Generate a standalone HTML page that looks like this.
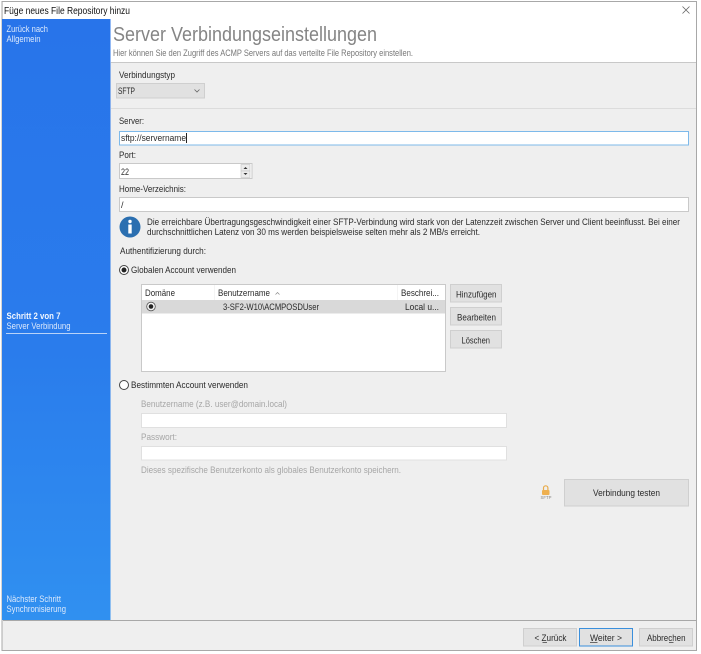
<!DOCTYPE html>
<html lang="de"><head><meta charset="utf-8"><title>Füge neues File Repository hinzu</title>
<style>
html,body{margin:0;padding:0;background:#fff;width:701px;height:654px;overflow:hidden}
svg{display:block;filter:blur(.35px)}
text{font-family:"Liberation Sans",sans-serif;font-size:9.5px;fill:#2a2a2a;white-space:pre}
.s{fill:#dce9fc}
.d{fill:#a6a6a6}
.b{fill:#e1e1e1;stroke:#cfcfcf;stroke-width:1}
.i{fill:#fff;stroke:#c9c9c9;stroke-width:1}
</style></head><body>
<svg width="701" height="654" viewBox="0 0 701 654" xmlns="http://www.w3.org/2000/svg">
<defs><linearGradient id="g" x1="0" y1="0" x2="0" y2="1"><stop offset="0" stop-color="#2874ea"/><stop offset=".55" stop-color="#2a7cec"/><stop offset="1" stop-color="#3090f0"/></linearGradient></defs>
<rect width="701" height="654" fill="#fff"/>
<rect x="2" y="1.500" width="694.500" height="649" fill="#efefef" stroke="#a8a8a8"/>
<rect x="3" y="2" width="693" height="60" fill="#fff"/>
<rect x="111" y="62" width="585" height="1" fill="#c8c8c8"/>
<rect x="111" y="108" width="585" height="1" fill="#dcdcdc"/>
<rect x="2" y="19" width="108.500" height="601" fill="url(#g)"/>
<rect x="3" y="620" width="693" height="1" fill="#a8a8a8"/>

<text x="4" y="14" textLength="126" lengthAdjust="spacingAndGlyphs" style="font-size:10px;fill:#111">Füge neues File Repository hinzu</text>
<path d="M682.500 6.500l7 7M689.500 6.500l-7 7" stroke="#666" stroke-width=".8" fill="none"/>

<text class="s" x="6.500" y="32" textLength="41.500" lengthAdjust="spacingAndGlyphs">Zurück nach</text>
<text class="s" x="6.500" y="42" textLength="34" lengthAdjust="spacingAndGlyphs">Allgemein</text>
<text x="6.500" y="319" textLength="54" lengthAdjust="spacingAndGlyphs" style="fill:#f2f7ff;font-weight:bold">Schritt 2 von 7</text>
<text class="s" x="6.500" y="329" textLength="64" lengthAdjust="spacingAndGlyphs">Server Verbindung</text>
<rect x="6" y="333" width="101" height="1" fill="#b9d3f8"/>
<text class="s" x="6.500" y="602" textLength="54.500" lengthAdjust="spacingAndGlyphs">Nächster Schritt</text>
<text class="s" x="6.500" y="612" textLength="59.500" lengthAdjust="spacingAndGlyphs">Synchronisierung</text>

<text x="113" y="41" textLength="264" lengthAdjust="spacingAndGlyphs" style="font-size:20.500px;fill:#858585">Server Verbindungseinstellungen</text>
<text x="113" y="56" textLength="300" lengthAdjust="spacingAndGlyphs" style="font-size:9px;fill:#777">Hier können Sie den Zugriff des ACMP Servers auf das verteilte File Repository einstellen.</text>

<text x="119" y="78" textLength="56" lengthAdjust="spacingAndGlyphs">Verbindungstyp</text>
<rect class="b" x="116.500" y="83.500" width="88" height="14.500"/>
<text x="118" y="94" textLength="17" lengthAdjust="spacingAndGlyphs">SFTP</text>
<path d="M194.500 89.500l2.500 2.500 2.500-2.500" stroke="#666" stroke-width=".8" fill="none"/>

<text x="119" y="124" textLength="25" lengthAdjust="spacingAndGlyphs">Server:</text>
<rect x="119.500" y="131.500" width="569" height="13.500" fill="#fff" stroke="#7db9ea"/>
<text x="121" y="141" textLength="65" lengthAdjust="spacingAndGlyphs">sftp://servername</text>
<rect x="186" y="133" width="1" height="10" fill="#222"/>

<text x="119" y="158" textLength="17" lengthAdjust="spacingAndGlyphs">Port:</text>
<rect class="i" x="119.500" y="163.500" width="132.500" height="15" stroke="#b5b5b5"/>
<text x="121" y="175" textLength="8" lengthAdjust="spacingAndGlyphs">22</text>
<rect x="241" y="164.500" width="9" height="6.500" fill="#ececec" stroke="#c4c4c4" stroke-width=".6"/>
<rect x="241" y="171" width="9" height="6.500" fill="#ececec" stroke="#c4c4c4" stroke-width=".6"/>
<path d="M243.500 169l2-2 2 2zM243.500 173l2 2 2-2z" fill="#333"/>

<text x="119" y="192" textLength="67" lengthAdjust="spacingAndGlyphs">Home-Verzeichnis:</text>
<rect class="i" x="119.500" y="197.500" width="569" height="14"/>
<text x="121" y="208" textLength="2.500" lengthAdjust="spacingAndGlyphs">/</text>

<circle cx="130" cy="227" r="10.500" fill="#2b6fb0"/>
<circle cx="130" cy="221.500" r="1.700" fill="#fff"/>
<rect x="128.300" y="224.500" width="3.400" height="9" fill="#fff"/>
<text x="147" y="225" textLength="533" lengthAdjust="spacingAndGlyphs">Die erreichbare Übertragungsgeschwindigkeit einer SFTP-Verbindung wird stark von der Latenzzeit zwischen Server und Client beeinflusst. Bei einer</text>
<text x="147" y="235" textLength="333" lengthAdjust="spacingAndGlyphs">durchschnittlichen Latenz von 30 ms werden beispielsweise selten mehr als 2 MB/s erreicht.</text>

<text x="120" y="254" textLength="86" lengthAdjust="spacingAndGlyphs">Authentifizierung durch:</text>

<circle cx="124" cy="270" r="4.500" fill="#fff" stroke="#444"/><circle cx="124" cy="270" r="2.500" fill="#222"/>
<text x="131" y="273" textLength="105" lengthAdjust="spacingAndGlyphs">Globalen Account verwenden</text>

<rect class="i" x="141.500" y="284.500" width="304" height="87"/>
<rect x="142" y="300" width="303" height="13.500" fill="#d9d9d9"/>
<rect x="214" y="285" width="1" height="15" fill="#f4f4f4"/>
<rect x="397" y="285" width="1" height="15" fill="#f4f4f4"/>
<text x="145" y="296" textLength="30" lengthAdjust="spacingAndGlyphs">Domäne</text>
<text x="218" y="296" textLength="52" lengthAdjust="spacingAndGlyphs">Benutzername</text>
<path d="M275.500 294.500l2-2 2 2" stroke="#888" stroke-width=".7" fill="none"/>
<text x="401" y="296" textLength="38" lengthAdjust="spacingAndGlyphs">Beschrei...</text>
<circle cx="151" cy="306.500" r="4.300" fill="#f4f4f4" stroke="#555" stroke-width=".8"/><circle cx="151" cy="306.500" r="2.300" fill="#222"/>
<text x="223" y="310" textLength="96" lengthAdjust="spacingAndGlyphs">3-SF2-W10\ACMPOSDUser</text>
<text x="405" y="310" textLength="34" lengthAdjust="spacingAndGlyphs">Local u...</text>

<rect class="b" x="450.500" y="284.500" width="51" height="17.500"/>
<text x="456" y="297.500" textLength="40.500" lengthAdjust="spacingAndGlyphs">Hinzufügen</text>
<rect class="b" x="450.500" y="307.500" width="51" height="17.500"/>
<text x="457" y="320.500" textLength="39" lengthAdjust="spacingAndGlyphs">Bearbeiten</text>
<rect class="b" x="450.500" y="330.500" width="51" height="17.500"/>
<text x="461.500" y="343.500" textLength="28.500" lengthAdjust="spacingAndGlyphs">Löschen</text>

<circle cx="124" cy="385" r="4.500" fill="#fff" stroke="#444"/>
<text x="131" y="388" textLength="117" lengthAdjust="spacingAndGlyphs">Bestimmten Account verwenden</text>

<text class="d" x="141" y="407" textLength="146" lengthAdjust="spacingAndGlyphs">Benutzername (z.B. user@domain.local)</text>
<rect x="141.500" y="413.500" width="365" height="14" fill="#fff" stroke="#e0e0e0"/>
<text class="d" x="141" y="440" textLength="36" lengthAdjust="spacingAndGlyphs">Passwort:</text>
<rect x="141.500" y="446.500" width="365" height="13.500" fill="#fff" stroke="#e0e0e0"/>
<text class="d" x="141" y="473" textLength="260" lengthAdjust="spacingAndGlyphs">Dieses spezifische Benutzerkonto als globales Benutzerkonto speichern.</text>

<path d="M543.500 490v-2a2.200 2.200 0 0 1 4.400 0v2" fill="none" stroke="#e8ab4a" stroke-width="1.200"/>
<rect x="542" y="490" width="7.500" height="5" rx="1" fill="#eeb050"/>
<text x="540.500" y="499" textLength="11" lengthAdjust="spacingAndGlyphs" style="font-size:4.500px;fill:#888">SFTP</text>

<rect class="b" x="564.500" y="479.500" width="124" height="26.500"/>
<text x="593" y="496" textLength="67" lengthAdjust="spacingAndGlyphs">Verbindung testen</text>

<rect class="b" x="523.500" y="628.500" width="53" height="17.500"/>
<text x="534.500" y="641" textLength="32" lengthAdjust="spacingAndGlyphs">&lt; Zurück</text>
<rect x="542.500" y="642" width="4.500" height=".7" fill="#333"/>
<rect x="579.500" y="628.500" width="53" height="17.500" fill="#e1e1e1" stroke="#3a8fdc"/>
<text x="590" y="641" textLength="32" lengthAdjust="spacingAndGlyphs">Weiter &gt;</text>
<rect x="590" y="642" width="7.500" height=".7" fill="#333"/>
<rect class="b" x="639.500" y="628.500" width="53" height="17.500"/>
<text x="647" y="641" textLength="38.500" lengthAdjust="spacingAndGlyphs">Abbrechen</text>
<rect x="669" y="642" width="4.500" height=".7" fill="#333"/>
</svg>
</body></html>
